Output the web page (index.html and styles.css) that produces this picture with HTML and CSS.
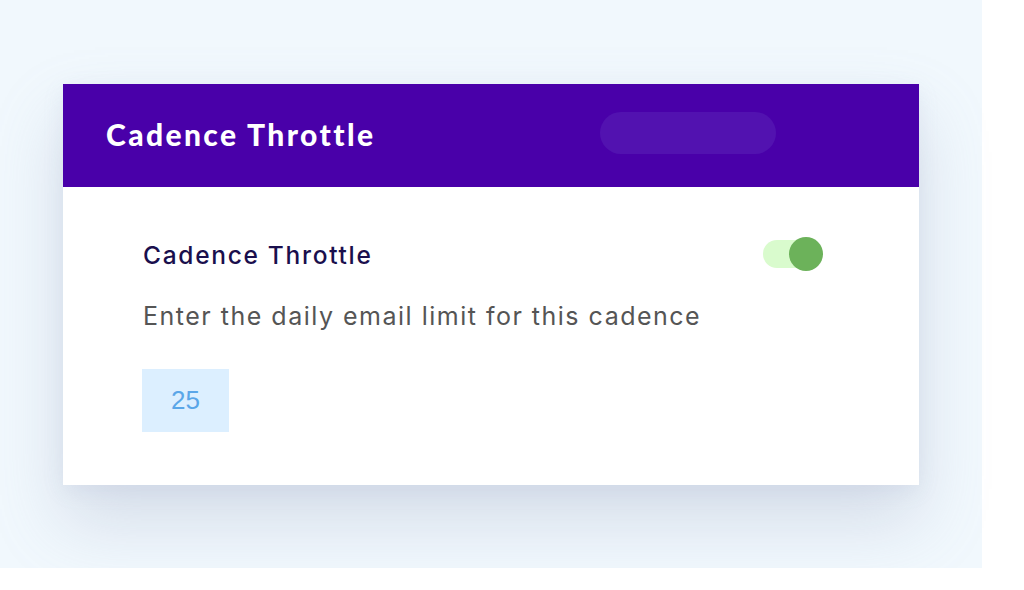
FILE: index.html
```html
<!DOCTYPE html>
<html lang="en">
<head>
    <meta charset="UTF-8">
    <meta name="viewport" content="width=device-width, initial-scale=1.0">
    <title>Cadence Throttle</title>
    <link rel="stylesheet" href="styles.css">
</head>
<body>
    <div class="stage">
        <div class="card">
            <div class="card-header">
                <h1>Cadence Throttle</h1>
                <div class="header-pill"></div>
            </div>
            <div class="card-body">
                <div class="setting-row">
                    <h2>Cadence Throttle</h2>
                    <div class="toggle">
                        <span class="toggle-track"></span>
                        <span class="toggle-knob"></span>
                    </div>
                </div>
                <p class="hint">Enter the daily email limit for this cadence</p>
                <div class="limit-box">25</div>
            </div>
        </div>
    </div>
</body>
</html>
```

FILE: styles.css
```css
body {
    margin: 0;
    background: #ffffff;
    font-family: "Open Sans", sans-serif;
}
.stage {
    width: 982px;
    height: 568px;
    background: #f1f8fd;
    padding: 84px 0 0 63px;
    box-sizing: border-box;
}
.card {
    width: 856px;
    background: #fff;
    box-shadow: 0 36px 64px rgba(150, 160, 190, 0.3), 0 6px 20px rgba(150, 160, 190, 0.12);
}
.card-header {
    height: 103px;
    background: #4900a9;
    display: flex;
    align-items: center;
    padding-left: 43px;
}
.card-header h1 {
    margin: -4px 0 0;
    width: 494px;
    color: #fff;
    font-family: Lato, sans-serif;
    font-weight: 900;
    font-size: 30px;
    letter-spacing: 2.4px;
}
.header-pill {
    width: 176px;
    height: 42px;
    border-radius: 21px;
    background: #5212b0;
    margin-top: -6px;
}
.card-body {
    padding: 50px 96px 53px 80px;
}
.setting-row {
    display: flex;
    align-items: center;
    justify-content: space-between;
    height: 34px;
}
.setting-row h2 {
    margin: 2px 0 0;
    color: #1a0f4d;
    font-family: Inter, sans-serif;
    font-weight: 500;
    font-size: 24.5px;
    letter-spacing: 1.7px;
}
.toggle {
    position: relative;
    width: 60px;
    height: 34px;
}
.toggle-track {
    position: absolute;
    left: 0;
    top: 3px;
    width: 50px;
    height: 28px;
    border-radius: 14px;
    background: #d9fbcd;
}
.toggle-knob {
    position: absolute;
    right: 0;
    top: 0;
    width: 34px;
    height: 34px;
    border-radius: 50%;
    background: #6cb25a;
}
.hint {
    margin: 30px 0 0;
    color: #555;
    font-family: Inter, sans-serif;
    font-size: 25px;
    letter-spacing: 1.5px;
}
.limit-box {
    margin-top: 38px;
    width: 87px;
    height: 63px;
    margin-left: -1px;
    background: #dcefff;
    color: #5aa6e8;
    font-family: "Liberation Sans", Arial, sans-serif;
    font-size: 26px;
    display: flex;
    align-items: center;
    justify-content: center;
}
```
